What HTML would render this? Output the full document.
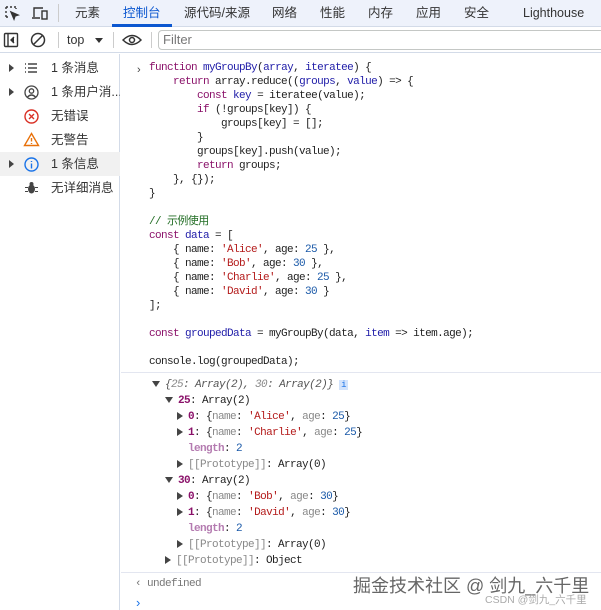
<!DOCTYPE html>
<html><head><meta charset="utf-8"><style>
*{margin:0;padding:0;box-sizing:border-box}
body{width:601px;height:610px;overflow:hidden;background:#fff;font-family:"Liberation Sans","Noto Sans CJK SC",sans-serif;font-size:12px;color:#1f1f1f;position:relative}
.abs{position:absolute}
.tb{left:0;top:0;width:601px;height:27px;background:#eef2fb;border-bottom:1px solid #d3dbe8}
.tab{position:absolute;top:4px;font-size:12.5px;line-height:18px;color:#333}
.tb2{left:0;top:27px;width:601px;height:26px;background:#fff;border-bottom:1px solid #d3dbe8}
.side{left:0;top:54px;width:120px;height:556px;border-right:1px solid #d3dbe8}
.si{position:absolute;left:0;width:120px;height:24px;font-size:12.5px;white-space:nowrap;overflow:hidden}
.si span.t{position:absolute;left:51px;top:3px;line-height:18px;color:#333}
.tri{position:absolute;left:9px;top:8px;width:0;height:0;border-left:5px solid #444;border-top:4px solid transparent;border-bottom:4px solid transparent}
.code{font-family:"Liberation Mono","Noto Sans CJK SC",monospace;font-size:11px;letter-spacing:-0.6px;white-space:pre;line-height:14px}
.k{color:#8a1169}.v{color:#1f1ca8}.s{color:#b41b1b}.n{color:#1a59a8}.c{color:#236e25}.g{color:#888}
.o{font-family:"Liberation Mono",monospace;font-size:11px;letter-spacing:-0.6px;white-space:pre;position:absolute;line-height:16px}
.p{color:#8a1169;font-weight:bold}.pl{color:#b47bb0;font-weight:bold}
.dt{display:inline-block;width:0;height:0;border-left:4px solid transparent;border-right:4px solid transparent;border-top:6px solid #444;margin-right:5px;vertical-align:middle}
.rt{display:inline-block;width:0;height:0;border-top:4px solid transparent;border-bottom:4px solid transparent;border-left:6px solid #444;margin-right:5px;vertical-align:middle}
</style></head><body>
<div class="abs tb">
<svg class="abs" style="left:4px;top:5px" width="16" height="16" viewBox="0 0 16 16" fill="none" stroke="#333" stroke-width="1.4"><path d="M2 2h2M6 2h2M2 2v2M2 6v2M2 10v2M2 12h2M10 2h2v2" stroke-dasharray="2 1"/><path d="M7 7l7 3-3 1-1 3z" fill="#333"/></svg>
<svg class="abs" style="left:31px;top:5px" width="18" height="16" viewBox="0 0 18 16" fill="none" stroke="#333" stroke-width="1.4"><path d="M3 12V3h9M1 13h8"/><rect x="11" y="6" width="5" height="8"/></svg>
<div class="abs" style="left:58px;top:4px;width:1px;height:18px;background:#ccc"></div>
<span class="tab" style="left:75px">元素</span>
<span class="tab" style="left:123px;color:#0b57d0">控制台</span>
<div class="abs" style="left:112px;top:24px;width:60px;height:3px;background:#0b57d0"></div>
<span class="tab" style="left:184px">源代码/来源</span>
<span class="tab" style="left:272px">网络</span>
<span class="tab" style="left:320px">性能</span>
<span class="tab" style="left:368px">内存</span>
<span class="tab" style="left:416px">应用</span>
<span class="tab" style="left:464px">安全</span>
<span class="tab" style="left:523px">Lighthouse</span>
</div>
<div class="abs tb2">
<svg class="abs" style="left:3px;top:5px" width="16" height="16" viewBox="0 0 16 16" fill="none" stroke="#333" stroke-width="1.4"><rect x="1.5" y="1.5" width="13" height="13" rx="1"/><path d="M5 2v12"/><path d="M11 5l-3 3 3 3" fill="#333"/></svg>
<svg class="abs" style="left:30px;top:5px" width="16" height="16" viewBox="0 0 16 16" fill="none" stroke="#333" stroke-width="1.5"><circle cx="8" cy="8" r="6.5"/><path d="M3.5 12.5l9-9"/></svg>
<div class="abs" style="left:58px;top:5px;width:1px;height:16px;background:#ccc"></div>
<span class="abs" style="left:67px;top:5px;font-size:12.5px;line-height:16px;color:#333">top</span>
<div class="abs" style="left:95px;top:11px;border-left:4px solid transparent;border-right:4px solid transparent;border-top:5px solid #333"></div>
<div class="abs" style="left:113px;top:5px;width:1px;height:16px;background:#ccc"></div>
<svg class="abs" style="left:122px;top:6px" width="20" height="14" viewBox="0 0 20 14" fill="none" stroke="#333" stroke-width="1.5"><path d="M1 7q9-9 18 0q-9 9-18 0z"/><circle cx="10" cy="7" r="2.5"/></svg>
<div class="abs" style="left:151px;top:5px;width:1px;height:16px;background:#ccc"></div>
<div class="abs" style="left:158px;top:3px;width:450px;height:20px;border:1px solid #c4c7c5;border-radius:4px"></div>
<span class="abs" style="left:163px;top:5px;font-size:13px;line-height:16px;color:#777">Filter</span>
</div>
<div class="abs side">
<div class="si" style="top:2px"><i class="tri"></i><svg class="abs" style="left:24px;top:5px" width="14" height="14" viewBox="0 0 14 14" stroke="#444" stroke-width="1.4"><path d="M1 3h1M1 7h1M1 11h1M4 3h9M4 7h9M4 11h9"/></svg><span class="t">1 条消息</span></div>
<div class="si" style="top:26px"><i class="tri"></i><svg class="abs" style="left:24px;top:5px" width="15" height="15" viewBox="0 0 15 15" fill="none" stroke="#444" stroke-width="1.3"><circle cx="7.5" cy="7.5" r="6.5"/><circle cx="7.5" cy="6" r="2.2"/><path d="M3.5 12q4-4 8 0"/></svg><span class="t">1 条用户消...</span></div>
<div class="si" style="top:50px"><svg class="abs" style="left:24px;top:5px" width="15" height="15" viewBox="0 0 15 15" fill="none" stroke="#d93025" stroke-width="1.4"><circle cx="7.5" cy="7.5" r="6.5"/><path d="M5 5l5 5M10 5l-5 5"/></svg><span class="t">无错误</span></div>
<div class="si" style="top:74px"><svg class="abs" style="left:23px;top:4px" width="17" height="15" viewBox="0 0 17 15" fill="none" stroke="#e8710a" stroke-width="1.4"><path d="M8.5 1.5l7 12h-14z"/><path d="M8.5 6v3.5M8.5 11v1"/></svg><span class="t">无警告</span></div>
<div class="si" style="top:98px;background:#f1f1f1"><i class="tri"></i><svg class="abs" style="left:24px;top:5px" width="15" height="15" viewBox="0 0 15 15" fill="none" stroke="#1a73e8" stroke-width="1.4"><circle cx="7.5" cy="7.5" r="6.5"/><path d="M7.5 6.5v5M7.5 4v1"/></svg><span class="t">1 条信息</span></div>
<div class="si" style="top:122px"><svg class="abs" style="left:25px;top:5px" width="13" height="14" viewBox="0 0 13 14" fill="#444"><ellipse cx="6.5" cy="8" rx="3.5" ry="4.5"/><circle cx="6.5" cy="3" r="2"/><path d="M0 6h3v1H0zM10 6h3v1h-3zM0 10h3v1H0zM10 10h3v1h-3z"/></svg><span class="t">无详细消息</span></div>
</div>
<div class="abs" style="left:137px;top:64px;font-size:11px;color:#444">›</div>
<div class="abs code" style="left:149px;top:61px"><span class="k">function</span> <span class="v">myGroupBy</span>(<span class="v">array</span>, <span class="v">iteratee</span>) {
    <span class="k">return</span> array.reduce((<span class="v">groups</span>, <span class="v">value</span>) => {
        <span class="k">const</span> <span class="v">key</span> = iteratee(value);
        <span class="k">if</span> (!groups[key]) {
            groups[key] = [];
        }
        groups[key].push(value);
        <span class="k">return</span> groups;
    }, {});
}

<span class="c">// 示例使用</span>
<span class="k">const</span> <span class="v">data</span> = [
    { name: <span class="s">'Alice'</span>, age: <span class="n">25</span> },
    { name: <span class="s">'Bob'</span>, age: <span class="n">30</span> },
    { name: <span class="s">'Charlie'</span>, age: <span class="n">25</span> },
    { name: <span class="s">'David'</span>, age: <span class="n">30</span> }
];

<span class="k">const</span> <span class="v">groupedData</span> = myGroupBy(data, <span class="v">item</span> => item.age);

console.log(groupedData);</div>
<div class="abs" style="left:121px;top:372px;width:480px;height:1px;background:#e3e6f0"></div>
<div class="o" style="left:152px;top:377px"><i class="dt"></i><i style="color:#555">{<span class="g">25</span>: Array(2), <span class="g">30</span>: Array(2)}</i> <span style="background:#d2e3fc;color:#1a73e8;font-size:9px;padding:0 2px">i</span></div>
<div class="o" style="left:165px;top:393px"><i class="dt"></i><span class="p">25</span>: Array(2)</div>
<div class="o" style="left:177px;top:409px"><i class="rt"></i><span class="p">0</span>: {<span class="g">name</span>: <span class="s">'Alice'</span>, <span class="g">age</span>: <span class="n">25</span>}</div>
<div class="o" style="left:177px;top:425px"><i class="rt"></i><span class="p">1</span>: {<span class="g">name</span>: <span class="s">'Charlie'</span>, <span class="g">age</span>: <span class="n">25</span>}</div>
<div class="o" style="left:188px;top:441px"><span class="pl">length</span>: <span class="n">2</span></div>
<div class="o" style="left:177px;top:457px"><i class="rt"></i><span class="g">[[Prototype]]</span>: Array(0)</div>
<div class="o" style="left:165px;top:473px"><i class="dt"></i><span class="p">30</span>: Array(2)</div>
<div class="o" style="left:177px;top:489px"><i class="rt"></i><span class="p">0</span>: {<span class="g">name</span>: <span class="s">'Bob'</span>, <span class="g">age</span>: <span class="n">30</span>}</div>
<div class="o" style="left:177px;top:505px"><i class="rt"></i><span class="p">1</span>: {<span class="g">name</span>: <span class="s">'David'</span>, <span class="g">age</span>: <span class="n">30</span>}</div>
<div class="o" style="left:188px;top:521px"><span class="pl">length</span>: <span class="n">2</span></div>
<div class="o" style="left:177px;top:537px"><i class="rt"></i><span class="g">[[Prototype]]</span>: Array(0)</div>
<div class="o" style="left:165px;top:553px"><i class="rt"></i><span class="g">[[Prototype]]</span>: Object</div>
<div class="abs" style="left:121px;top:572px;width:480px;height:1px;background:#e3e6f0"></div>
<div class="o" style="left:135px;top:576px;color:#777">‹ undefined</div>
<div class="abs" style="left:136px;top:595px;color:#1a73e8;font-size:13px">›</div>
<div class="abs" style="left:353px;top:572px;font-size:18px;color:#666;text-shadow:1px 1px 0 #fff">掘金技术社区 @ 剑九_六千里</div>
<div class="abs" style="left:485px;top:592px;font-size:10.5px;color:#aaa">CSDN @剑九_六千里</div>
</body></html>
